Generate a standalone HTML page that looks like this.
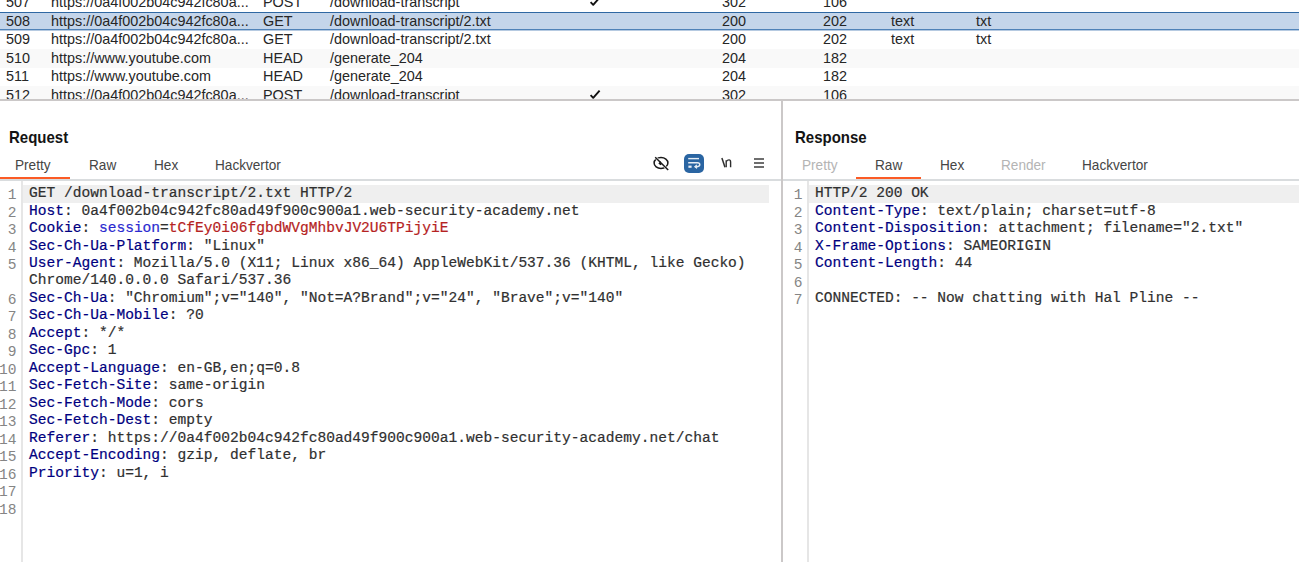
<!DOCTYPE html>
<html><head><meta charset="utf-8"><style>
*{margin:0;padding:0;box-sizing:border-box}
html,body{width:1299px;height:562px;overflow:hidden;background:#fff}
body{position:relative;font-family:"Liberation Sans",sans-serif;color:#262626}
.a{position:absolute;white-space:pre}
.row{position:absolute;left:0;width:1299px;height:18px}
.row .a{top:0;line-height:18px;font-size:14.4px}
.tab{position:absolute;font-size:15px;line-height:16px;color:#454545;transform:scaleX(0.907);transform-origin:0 0}
.dis{color:#b4b4b4}
.code{position:absolute;font-family:"Liberation Mono",monospace;font-size:14.57px;line-height:17.48px;color:#303030;-webkit-text-stroke:0.2px}
.code div{height:17.48px;white-space:pre}
.ln{position:absolute;font-family:"Liberation Mono",monospace;font-size:14.57px;line-height:17.48px;color:#858585;text-align:right;white-space:pre}
.k{color:#000080}
.s{color:#2a2ad0}
.v{color:#b52222}
</style></head><body>

<div class="a" style="left:0;top:0;width:1299px;height:99px;overflow:hidden">
<div class="a" style="left:0;top:49px;width:1299px;height:19px;background:#f9f9f9"></div>
<div class="a" style="left:0;top:86px;width:1299px;height:13px;background:#f9f9f9"></div>
<div class="a" style="left:0;top:12px;width:1299px;height:1px;background:#2f68a3"></div>
<div class="a" style="left:0;top:13px;width:1299px;height:16px;background:#c4d5ea"></div>
<div class="a" style="left:0;top:29px;width:1299px;height:1px;background:#4f82b8"></div>
<div class="a" style="left:0;top:30px;width:1299px;height:1px;background:#b6cae1"></div>
<div class="row" style="top:-6.80px">
<span class="a" style="left:6px">507</span>
<span class="a" style="left:51px">https://0a4f002b04c942fc80a...</span>
<span class="a" style="left:263px">POST</span>
<span class="a" style="left:330px">/download-transcript</span>
<svg class="a" style="left:585.7px;top:0.9px" width="18" height="14" viewBox="0 0 18 14"><path d="M4.6 5.2 L7.2 7.8 L13.6 0.6" transform="translate(0,3)" fill="none" stroke="#111" stroke-width="1.9" stroke-linejoin="round"/></svg>
<span class="a" style="left:722px">302</span>
<span class="a" style="left:823px">106</span>
</div>
<div class="row" style="top:11.70px">
<span class="a" style="left:6px">508</span>
<span class="a" style="left:51px">https://0a4f002b04c942fc80a...</span>
<span class="a" style="left:263px">GET</span>
<span class="a" style="left:330px">/download-transcript/2.txt</span>
<span class="a" style="left:722px">200</span>
<span class="a" style="left:823px">202</span>
<span class="a" style="left:891px">text</span>
<span class="a" style="left:976px">txt</span>
</div>
<div class="row" style="top:30.20px">
<span class="a" style="left:6px">509</span>
<span class="a" style="left:51px">https://0a4f002b04c942fc80a...</span>
<span class="a" style="left:263px">GET</span>
<span class="a" style="left:330px">/download-transcript/2.txt</span>
<span class="a" style="left:722px">200</span>
<span class="a" style="left:823px">202</span>
<span class="a" style="left:891px">text</span>
<span class="a" style="left:976px">txt</span>
</div>
<div class="row" style="top:48.70px">
<span class="a" style="left:6px">510</span>
<span class="a" style="left:51px">https://www.youtube.com</span>
<span class="a" style="left:263px">HEAD</span>
<span class="a" style="left:330px">/generate_204</span>
<span class="a" style="left:722px">204</span>
<span class="a" style="left:823px">182</span>
</div>
<div class="row" style="top:67.20px">
<span class="a" style="left:6px">511</span>
<span class="a" style="left:51px">https://www.youtube.com</span>
<span class="a" style="left:263px">HEAD</span>
<span class="a" style="left:330px">/generate_204</span>
<span class="a" style="left:722px">204</span>
<span class="a" style="left:823px">182</span>
</div>
<div class="row" style="top:85.70px">
<span class="a" style="left:6px">512</span>
<span class="a" style="left:51px">https://0a4f002b04c942fc80a...</span>
<span class="a" style="left:263px">POST</span>
<span class="a" style="left:330px">/download-transcript</span>
<svg class="a" style="left:585.7px;top:1.8px" width="18" height="14" viewBox="0 0 18 14"><path d="M4.6 5.2 L7.2 7.8 L13.6 0.6" transform="translate(0,3)" fill="none" stroke="#111" stroke-width="1.9" stroke-linejoin="round"/></svg>
<span class="a" style="left:722px">302</span>
<span class="a" style="left:823px">106</span>
</div>
</div>
<div class="a" style="left:0;top:99px;width:1299px;height:2px;background:#cbc8c8"></div>
<div class="a" style="left:781px;top:101px;width:2px;height:461px;background:#cbc8c8"></div>
<span class="a" style="left:9px;top:126.1px;font-weight:bold;font-size:15.5px;line-height:20px;color:#141414;transform:scale(0.968,1.1);transform-origin:0 0">Request</span>
<span class="a" style="left:795px;top:126.1px;font-weight:bold;font-size:15.5px;line-height:20px;color:#141414;transform:scale(0.968,1.1);transform-origin:0 0">Response</span>
<span class="tab a " style="left:15px;top:157.1px">Pretty</span>
<span class="tab a " style="left:89px;top:157.1px">Raw</span>
<span class="tab a " style="left:154px;top:157.1px">Hex</span>
<span class="tab a " style="left:215px;top:157.1px">Hackvertor</span>
<span class="tab a dis" style="left:802px;top:157.1px">Pretty</span>
<span class="tab a " style="left:875px;top:157.1px">Raw</span>
<span class="tab a " style="left:940px;top:157.1px">Hex</span>
<span class="tab a dis" style="left:1001px;top:157.1px">Render</span>
<span class="tab a " style="left:1082px;top:157.1px">Hackvertor</span>
<div class="a" style="left:0;top:179px;width:781px;height:2px;background:#d9dcde"></div>
<div class="a" style="left:783px;top:179px;width:516px;height:2px;background:#d9dcde"></div>
<div class="a" style="left:0;top:177px;width:70px;height:2px;background:#fb5b25"></div>
<div class="a" style="left:856px;top:177px;width:65px;height:2px;background:#fb5b25"></div>
<svg class="a" style="left:650px;top:152px" width="22" height="22" viewBox="0 0 22 22">
<ellipse cx="11" cy="11" rx="6.9" ry="5.4" fill="none" stroke="#1a1a1a" stroke-width="1.5"/>
<line x1="4.6" y1="4.6" x2="18.6" y2="18.4" stroke="#fff" stroke-width="2.6"/>
<line x1="5.2" y1="5.2" x2="18.2" y2="18.0" stroke="#1a1a1a" stroke-width="1.5"/>
<path d="M8.4 11.4 L10.6 8.9 L11.6 12.4 L10.4 13.2 Z" fill="#1a1a1a"/>
</svg>
<svg class="a" style="left:684px;top:154px" width="20" height="19" viewBox="0 0 20 19">
<rect x="0" y="0" width="20" height="19" rx="5" fill="#2a65a2"/>
<line x1="4.2" y1="4.6" x2="15" y2="4.6" stroke="#e6edf5" stroke-width="1.4"/>
<path d="M4.2 8.7 H13.4 Q15.8 8.7 15.8 10.6 Q15.8 12.6 13.2 12.7 H11.6" fill="none" stroke="#e6edf5" stroke-width="1.4"/>
<path d="M12.6 10.9 L10.4 12.7 L12.6 14.4 Z" fill="#e6edf5" stroke="#e6edf5" stroke-width="0.8" stroke-linejoin="round"/>
<rect x="4.4" y="11.6" width="3.2" height="2.2" fill="#e6edf5"/>
</svg>
<svg class="a" style="left:718px;top:155px" width="16" height="16" viewBox="0 0 16 16">
<path d="M3.9 3 L7.0 12.2" stroke="#2e2e2e" stroke-width="1.5" fill="none"/>
<path d="M8.2 12.2 V5.2 M8.2 6.6 Q9.4 4.9 11 4.9 Q12.6 4.9 12.6 7 V12.2" stroke="#2e2e2e" stroke-width="1.4" fill="none"/>
</svg>
<div class="a" style="left:754px;top:158px;width:10px;height:2px;background:#6e6e6e"></div>
<div class="a" style="left:754px;top:162px;width:10px;height:2px;background:#6e6e6e"></div>
<div class="a" style="left:754px;top:166px;width:10px;height:2px;background:#6e6e6e"></div>
<div class="a" style="left:21px;top:181px;width:2px;height:381px;background:#e6e6e6"></div>
<div class="a" style="left:23px;top:185.1px;width:746px;height:17.5px;background:#efefef"></div>
<div class="code" style="left:29px;top:185.1px"><div>GET /download-transcript/2.txt HTTP/2</div><div><span class="k">Host</span>: 0a4f002b04c942fc80ad49f900c900a1.web-security-academy.net</div><div><span class="k">Cookie</span>: <span class="s">session</span>=<span class="v">tCfEy0i06fgbdWVgMhbvJV2U6TPijyiE</span></div><div><span class="k">Sec-Ch-Ua-Platform</span>: &quot;Linux&quot;</div><div><span class="k">User-Agent</span>: Mozilla/5.0 (X11; Linux x86_64) AppleWebKit/537.36 (KHTML, like Gecko)</div><div>Chrome/140.0.0.0 Safari/537.36</div><div><span class="k">Sec-Ch-Ua</span>: &quot;Chromium&quot;;v=&quot;140&quot;, &quot;Not=A?Brand&quot;;v=&quot;24&quot;, &quot;Brave&quot;;v=&quot;140&quot;</div><div><span class="k">Sec-Ch-Ua-Mobile</span>: ?0</div><div><span class="k">Accept</span>: */*</div><div><span class="k">Sec-Gpc</span>: 1</div><div><span class="k">Accept-Language</span>: en-GB,en;q=0.8</div><div><span class="k">Sec-Fetch-Site</span>: same-origin</div><div><span class="k">Sec-Fetch-Mode</span>: cors</div><div><span class="k">Sec-Fetch-Dest</span>: empty</div><div><span class="k">Referer</span>: https://0a4f002b04c942fc80ad49f900c900a1.web-security-academy.net/chat</div><div><span class="k">Accept-Encoding</span>: gzip, deflate, br</div><div><span class="k">Priority</span>: u=1, i</div><div>&nbsp;</div><div>&nbsp;</div></div>
<div class="ln" style="left:-4px;top:187.1px;width:20.5px">1
2
3
4
5

6
7
8
9
10
11
12
13
14
15
16
17
18</div>
<div class="a" style="left:807px;top:181px;width:2px;height:381px;background:#e6e6e6"></div>
<div class="a" style="left:809px;top:185.1px;width:490px;height:17.5px;background:#efefef"></div>
<div class="code" style="left:815px;top:185.1px"><div>HTTP/2 200 OK</div><div><span class="k">Content-Type</span>: text/plain; charset=utf-8</div><div><span class="k">Content-Disposition</span>: attachment; filename=&quot;2.txt&quot;</div><div><span class="k">X-Frame-Options</span>: SAMEORIGIN</div><div><span class="k">Content-Length</span>: 44</div><div>&nbsp;</div><div>CONNECTED: -- Now chatting with Hal Pline --</div></div>
<div class="ln" style="left:782px;top:187.1px;width:20.5px">1
2
3
4
5
6
7</div>
</body></html>
